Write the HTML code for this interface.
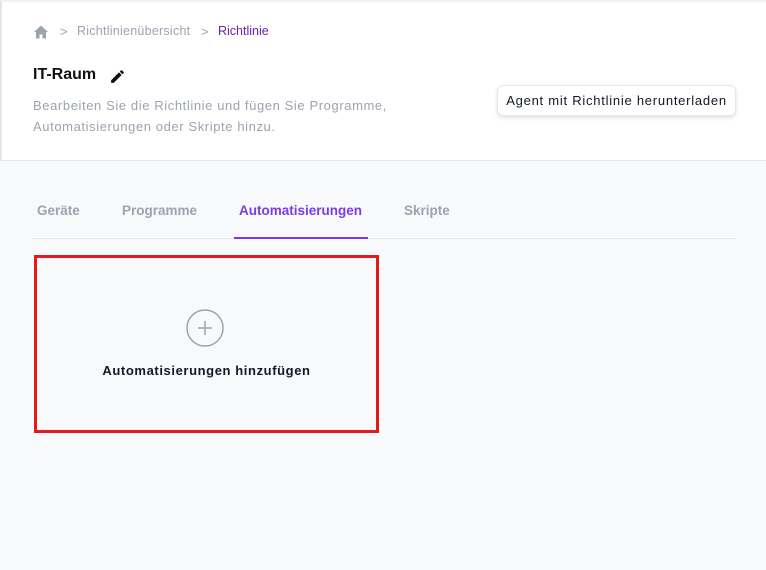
<!DOCTYPE html>
<html><head><meta charset="utf-8"><style>
*{margin:0;padding:0;box-sizing:border-box}
body{width:766px;height:570px;overflow:hidden;background:#f8f9fb;font-family:"Liberation Sans",sans-serif;position:relative}
.hdr{position:absolute;left:0;top:0;width:766px;height:161px;background:#fff;border-bottom:1px solid #e5e7eb;border-left:2px solid #e5e7eb;border-top:2px solid #f1f2f4}
.a{position:absolute;white-space:nowrap}
</style></head><body>
<div class="hdr"></div>
<svg class="a" style="left:33px;top:24px" width="16" height="16" viewBox="0 0 16 16"><path d="M8 1.5L1 8h2v6.5h3.5v-4h3v4H13V8h2z" fill="#9ca3af"/></svg>
<div class="a" style="left:60px;top:24px;font-size:13px;color:#9ca3af">&gt;</div>
<div class="a" style="left:77px;top:24px;font-size:12.5px;letter-spacing:.25px;color:#9ca3af">Richtlinienübersicht</div>
<div class="a" style="left:201px;top:24px;font-size:13px;color:#9ca3af">&gt;</div>
<div class="a" style="left:218px;top:24px;font-size:12.5px;color:#6b21a8">Richtlinie</div>
<div class="a" style="left:33px;top:66px;font-size:16px;font-weight:bold;color:#111">IT-Raum</div>
<svg class="a" style="left:109px;top:68px" width="17" height="17" viewBox="0 0 24 24"><path d="M3 17.25V21h3.75L17.81 9.94l-3.75-3.75zM20.71 7.04a1 1 0 0 0 0-1.41l-2.34-2.34a1 1 0 0 0-1.41 0l-1.83 1.83 3.75 3.75z" fill="#111"/></svg>
<div class="a" style="left:33px;top:95px;font-size:13px;letter-spacing:.6px;line-height:21px;color:#9ca3af">Bearbeiten Sie die Richtlinie und fügen Sie Programme,<br>Automatisierungen oder Skripte hinzu.</div>
<div class="a" style="left:497px;top:85px;width:239px;height:31px;background:#fff;border:1px solid #e5e7eb;border-radius:6px;box-shadow:0 2px 4px rgba(0,0,0,.12);font-size:13px;letter-spacing:.75px;color:#111827;text-align:center;line-height:29px">Agent mit Richtlinie herunterladen</div>
<div class="a" style="left:37px;top:203px;font-size:13.5px;font-weight:bold;color:#9ca3af">Geräte</div>
<div class="a" style="left:122px;top:203px;font-size:13.5px;font-weight:bold;color:#9ca3af">Programme</div>
<div class="a" style="left:239px;top:203px;font-size:13.5px;font-weight:bold;color:#7c3aed">Automatisierungen</div>
<div class="a" style="left:404px;top:203px;font-size:13.5px;font-weight:bold;color:#9ca3af">Skripte</div>
<div class="a" style="left:33px;top:238px;width:703px;height:1px;background:#e5e7eb"></div>
<div class="a" style="left:234px;top:237px;width:134px;height:2px;background:#7c3aed"></div>
<div class="a" style="left:34px;top:255px;width:345px;height:178px;border:3.5px solid #e3191c"></div>
<svg class="a" style="left:186px;top:309px" width="38" height="38" viewBox="0 0 38 38"><circle cx="19" cy="19" r="18" fill="none" stroke="#9ca3af" stroke-width="1.5"/><path d="M19 12v14M12 19h14" stroke="#9ca3af" stroke-width="1.5"/></svg>
<div class="a" style="left:34px;width:345px;top:363px;text-align:center;font-size:13px;letter-spacing:.6px;font-weight:bold;color:#111827">Automatisierungen hinzufügen</div>
</body></html>
